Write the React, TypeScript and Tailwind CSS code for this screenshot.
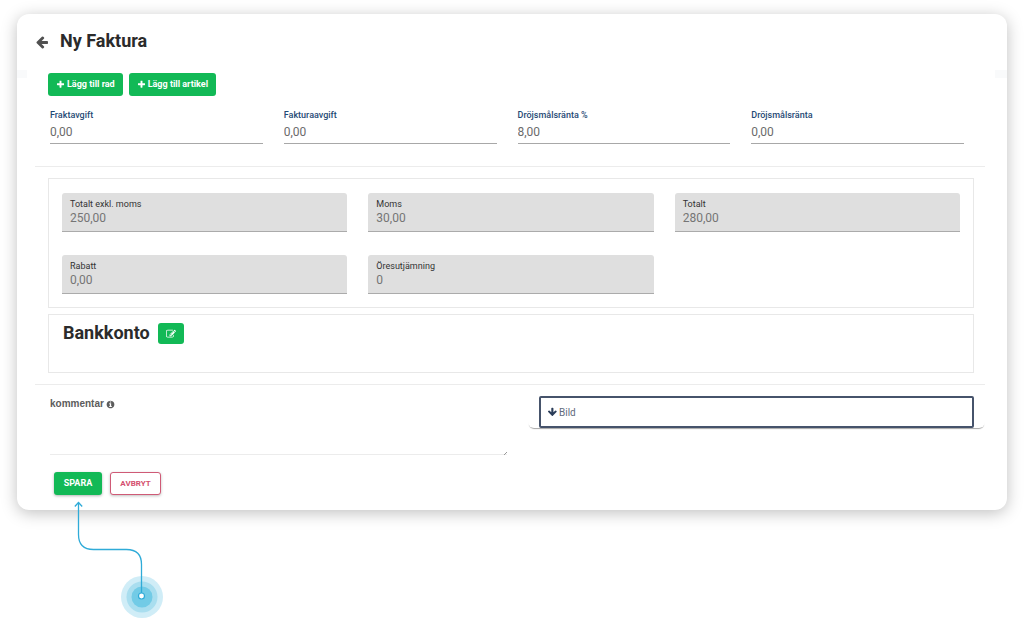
const iconPaths = {
  plus: "M1600 736v192q0 40-28 68t-68 28h-416v416q0 40-28 68t-68 28h-192q-40 0-68-28t-28-68v-416h-416q-40 0-68-28t-28-68v-192q0-40 28-68t68-28h416v-416q0-40 28-68t68-28h192q40 0 68 28t28 68v416h416q40 0 68 28t28 68z",
  arrow:
    "M1664 896v128q0 53-32.5 90.5t-84.5 37.5h-704l293 294q38 36 38 90t-38 90l-75 76q-37 37-90 37-52 0-91-37l-651-652q-37-37-37-90 0-52 37-91l651-650q38-38 91-38 52 0 90 38l75 74q38 38 38 91t-38 91l-293 293h704q52 0 84.500 37.500t32.500 90.500z",
  info: "M1152 1376v-160q0-14-9-23t-23-9h-96v-512q0-14-9-23t-23-9h-320q-14 0-23 9t-9 23v160q0 14 9 23t23 9h96v320h-96q-14 0-23 9t-9 23v160q0 14 9 23t23 9h448q14 0 23-9t9-23zm-128-896v-160q0-14-9-23t-23-9h-192q-14 0-23 9t-9 23v160q0 14 9 23t23 9h192q14 0 23-9t9-23zm640 416q0 209-103 385.500t-279.500 279.500-385.500 103-385.500-103-279.500-279.500-103-385.500 103-385.500 279.500-279.500 385.500-103 385.500 103 279.500 279.500 103 385.500z",
  edit: "M888 1184l116-116-152-152-116 116v56h96v96h56zm440-720q-16-16-33 1l-350 350q-17 17-1 33t33-1l350-350q17-17 1-33zm80 594v190q0 119-84.500 203.500t-203.500 84.500h-832q-119 0-203.500-84.500t-84.500-203.500v-832q0-119 84.500-203.500t203.500-84.500h832q63 0 117 25 15 7 18 23 3 17-9 29l-49 49q-14 14-32 8-23-6-45-6h-832q-66 0-113 47t-47 113v832q0 66 47 113t113 47h832q66 0 113-47t47-113v-126q0-13 9-22l64-64q15-15 35-7t20 29zm-96-738l288 288-672 672h-288v-288zm444 132l-92 92-288-288 92-92q28-28 68-28t68 28l152 152q28 28 28 68t-28 68z",
};

const fees = [
  { id: "fraktavgift", label: "Fraktavgift", value: "0,00" },
  { id: "fakturaavgift", label: "Fakturaavgift", value: "0,00" },
  { id: "ranta-procent", label: "Dröjsmålsränta %", value: "8,00" },
  { id: "ranta", label: "Dröjsmålsränta", value: "0,00" },
];

const totals = [
  { id: "exkl-moms", label: "Totalt exkl. moms", value: "250,00" },
  { id: "moms", label: "Moms", value: "30,00" },
  { id: "totalt", label: "Totalt", value: "280,00" },
  { id: "rabatt", label: "Rabatt", value: "0,00" },
  { id: "oresutjamning", label: "Öresutjämning", value: "0" },
];

function Icon({ name, className }: { name: keyof typeof iconPaths; className: string }) {
  return (
    <svg viewBox="0 0 1792 1792" fill="currentColor" aria-hidden="true" className={className}>
      <path d={iconPaths[name]} />
    </svg>
  );
}

function AddButton({ text }: { text: string }) {
  return (
    <button
      type="button"
      className="flex h-[23px] items-center gap-[2px] rounded-[3px] bg-[#12b956] px-2 text-[9px] font-bold text-white"
    >
      <Icon name="plus" className="size-[9px]" />
      {text}
    </button>
  );
}

function Pointer() {
  return (
    <svg
      className="pointer-events-none absolute top-[486px] left-[57px] h-[118px] w-[90px]"
      viewBox="0 0 90 118"
      fill="none"
    >
      <circle cx="68" cy="97" r="21" fill="#d0edf7" />
      <circle cx="68" cy="97" r="15.5" fill="#a9deef" />
      <circle cx="68" cy="97" r="10.5" fill="#72cbe6" />
      <path
        d="M4.500 2.500V34.500Q4.500 49.500 19.500 49.500H52.500Q67.500 49.500 67.500 64.500V93"
        stroke="#2fabd8"
        strokeWidth="1.3"
      />
      <path d="M0.800 6.500L4.500 2.500L8.200 6.500" stroke="#2fabd8" strokeWidth="1.3" />
      <circle cx="67.500" cy="96" r="3" fill="#fff" stroke="#2fabd8" strokeWidth="1.2" />
    </svg>
  );
}

function App() {
  return (
    <div className="min-h-screen overflow-hidden bg-white px-[17px] pt-[14px] font-['Roboto',sans-serif]">
      <main className="relative rounded-xl bg-white px-[18px] pt-[15px] pb-[15px] shadow-[0_3px_16px_rgba(0,0,0,0.25)]">
        <div className="absolute inset-x-0 top-[56px] flex justify-between">
          <span className="h-2 w-[10px] bg-gray-50" />
          <span className="h-2 w-3 bg-gray-50" />
        </div>

        <header className="flex items-center gap-[11px]">
          <a href="#" aria-label="Tillbaka" className="pt-[2px] text-[#505050]">
            <Icon name="arrow" className="size-[14px]" />
          </a>
          <h1 className="text-lg leading-6 font-bold text-[#2b2b2b]">Ny Faktura</h1>
        </header>

        <div className="mt-5 ml-[13px] flex gap-[6px]">
          <AddButton text="Lägg till rad" />
          <AddButton text="Lägg till artikel" />
        </div>

        <div className="mt-3 mr-[25px] ml-[15px] grid grid-cols-4 gap-[21px]">
          {fees.map((fee) => (
            <div key={fee.id}>
              <label
                htmlFor={fee.id}
                className="block text-[9px] leading-[14px] font-medium text-[#1f4a75]"
              >
                {fee.label}
              </label>
              <input
                id={fee.id}
                defaultValue={fee.value}
                className="block h-[22px] w-full border-b border-[#a8a8a8] pb-[2px] text-xs text-[#6b6b6b] outline-none"
              />
            </div>
          ))}
        </div>

        <hr className="mt-[22px] mr-1 border-[#ececec]" />

        <section className="mt-[11px] mr-[15px] ml-[13px] grid grid-cols-3 gap-x-[21px] gap-y-[23px] border border-[#e8e8e8] px-[13px] pt-[14px] pb-[13px]">
          {totals.map((total) => (
            <div
              key={total.id}
              className="h-[39px] rounded-t-[3px] border-b border-[#ababab] bg-[#dfdfdf] px-2 pt-1"
            >
              <label htmlFor={total.id} className="block text-[9px] leading-[14px] text-[#333]">
                {total.label}
              </label>
              <input
                id={total.id}
                value={total.value}
                readOnly
                className="block h-[14px] w-full text-xs leading-[14px] text-[#757575] outline-none"
              />
            </div>
          ))}
        </section>

        <section className="mt-[6px] mr-[15px] ml-[13px] flex h-[59px] items-start gap-2 border border-[#e8e8e8] px-[14px] pt-2">
          <h2 className="text-lg leading-5 font-bold text-[#2b2b2b]">Bankkonto</h2>
          <button
            type="button"
            aria-label="Redigera bankkonto"
            className="flex h-[21px] w-[26px] items-center justify-center rounded-[3px] bg-[#12b956] text-white"
          >
            <Icon name="edit" className="size-[10px]" />
          </button>
        </section>

        <hr className="mt-[11px] mr-1 border-[#ececec]" />

        <div className="mr-1 ml-[15px] grid grid-cols-2 gap-[21px]">
          <div className="relative pt-3">
            <label
              htmlFor="kommentar"
              className="flex items-center gap-[2px] font-['Liberation_Sans'] text-[10px] leading-[14px] font-bold text-[#5c5c5c]"
            >
              kommentar <Icon name="info" className="size-[9px]" />
            </label>
            <textarea
              id="kommentar"
              className="mt-1 block h-10 w-full resize-none border-b border-[#ececec] text-xs outline-none"
            />
            <svg viewBox="0 0 3 3" className="absolute right-0 bottom-0 size-[3px]">
              <path d="M0 3L3 0" stroke="#999" />
            </svg>
          </div>
          <div className="h-[43px] rounded-b-md px-[11px] pt-[11px] shadow-[0_2px_1px_-1px_rgba(0,0,0,0.35)]">
            <button
              type="button"
              className="flex h-8 w-full items-center gap-[2px] rounded-[2px] border-2 border-[#46536b] px-[6px] text-[10px] text-[#5f6b7c]"
            >
              <Icon name="arrow" className="size-[10px] -rotate-90 text-[#2b3d59]" />
              Bild
            </button>
          </div>
        </div>

        <div className="mt-[17px] ml-[19px] flex gap-2 text-[9px] font-bold">
          <button
            type="button"
            className="h-[23px] w-12 rounded-[3px] bg-[#12b956] text-white shadow-[0_1px_3px_rgba(0,0,0,0.3)]"
          >
            SPARA
          </button>
          <button
            type="button"
            className="h-[23px] w-[51px] rounded-[3px] border border-[#cf5a76] bg-white text-[8px] text-[#d4506e] shadow-[0_1px_3px_rgba(0,0,0,0.25)]"
          >
            AVBRYT
          </button>
        </div>

        <Pointer />
      </main>
    </div>
  );
}

export default App;
